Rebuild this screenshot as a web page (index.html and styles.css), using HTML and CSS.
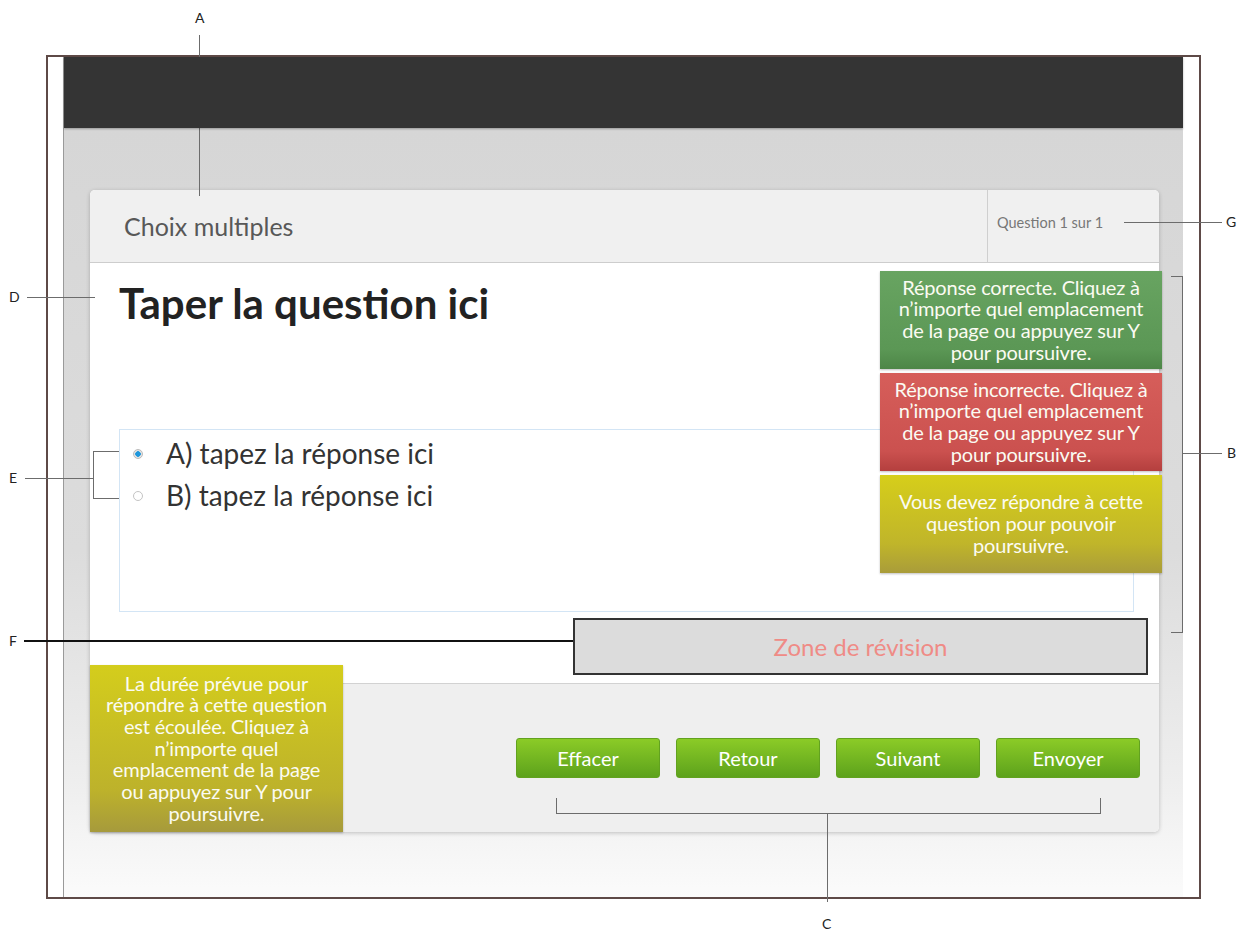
FILE: index.html
```html
<!DOCTYPE html>
<html lang="fr">
<head>
    <meta charset="UTF-8">
    <meta name="viewport" content="width=device-width, initial-scale=1.0">
    <title>Diapositive de question à choix multiples</title>
    <link rel="stylesheet" href="styles.css">
</head>
<body>
    <div class="figure">
        <div class="frame">
            <div class="app">
                <div class="topbar"></div>
                <div class="stage">
                    <div class="quiz-card">
                        <div class="card-head">
                            <div class="slide-type">Choix multiples</div>
                            <div class="progress">Question 1 sur 1</div>
                        </div>

                        <div class="card-body">
                            <h1 class="question">Taper la question ici</h1>
                            <div class="answers">
                                <label class="answer"><span class="radio checked"></span>A) tapez la réponse ici</label>
                                <label class="answer"><span class="radio"></span>B) tapez la réponse ici</label>
                            </div>
                            <div class="review-area">Zone de révision</div>
                        </div>

                        <div class="card-foot">
                            <button class="btn">Effacer</button>
                            <button class="btn">Retour</button>
                            <button class="btn">Suivant</button>
                            <button class="btn">Envoyer</button>
                        </div>

                        <!-- messages de retour -->
                        <div class="feedback">
                            <div class="msg msg-correct">Réponse correcte. Cliquez à<br>n’importe quel emplacement<br>de la page ou appuyez sur Y<br>pour poursuivre.</div>
                            <div class="msg msg-wrong">Réponse incorrecte. Cliquez à<br>n’importe quel emplacement<br>de la page ou appuyez sur Y<br>pour poursuivre.</div>
                            <div class="msg msg-required">Vous devez répondre à cette<br>question pour pouvoir<br>poursuivre.</div>
                        </div>
                        <div class="msg msg-timeout">La durée prévue pour<br>répondre à cette question<br>est écoulée. Cliquez à<br>n’importe quel<br>emplacement de la page<br>ou appuyez sur Y pour<br>poursuivre.</div>
                    </div>
                </div>
            </div>
        </div>

        <!-- légendes -->
        <div class="callouts">
            <span class="tag tag-a">A</span>
            <span class="tag tag-b">B</span>
            <span class="tag tag-c">C</span>
            <span class="tag tag-d">D</span>
            <span class="tag tag-e">E</span>
            <span class="tag tag-f">F</span>
            <span class="tag tag-g">G</span>

            <div class="lead lead-a"></div>
            <div class="lead lead-b"></div>
            <div class="lead lead-c"></div>
            <div class="lead lead-d"></div>
            <div class="lead lead-e"></div>
            <div class="lead lead-f"></div>
            <div class="lead lead-g"></div>

            <div class="bracket bracket-b"></div>
            <div class="bracket bracket-c"></div>
            <div class="bracket bracket-e"></div>
        </div>
    </div>
</body>
</html>
```

FILE: styles.css
```css
body {
    margin: 0;
    background: #fff;
    font-family: Lato, "Open Sans", sans-serif;
}

.figure {
    position: relative;
    width: 1245px;
    height: 934px;
    padding-top: 55px;
    padding-left: 46px;
    box-sizing: border-box;
}

.frame {
    width: 1155px;
    height: 844px;
    border: 2px solid #5e4a47;
    box-sizing: border-box;
    background: #fff;
    padding-left: 15px;
}

.app {
    width: 1120px;
    height: 100%;
    border-left: 1px solid #9a9a9a;
    box-sizing: border-box;
    display: flex;
    flex-direction: column;
}

.topbar {
    height: 71px;
    background: #343434;
    box-shadow: 0 1px 2px rgba(0, 0, 0, 0.3);
    position: relative;
    z-index: 1;
}

.stage {
    flex: 1;
    padding: 62px 0 0 26px;
    background: linear-gradient(#d6d6d6 0%, #dcdcdc 55%, #eeeeee 85%, #fbfbfb 100%);
}

/* carte de la question */
.quiz-card {
    position: relative;
    width: 1069px;
    border-radius: 5px;
    background: #fff;
    box-shadow: 0 1px 4px rgba(0, 0, 0, 0.22);
}

.card-head {
    display: flex;
    height: 72px;
    background: #f0f0f0;
    border-bottom: 1px solid #cdcdcd;
    border-radius: 5px 5px 0 0;
}

.slide-type {
    flex: 1;
    display: flex;
    align-items: center;
    padding-left: 34px;
    font-size: 25px;
    color: #585858;
}

.progress {
    width: 172px;
    border-left: 1px solid #cfcfcf;
    display: flex;
    align-items: center;
    padding: 0 0 8px 9px;
    box-sizing: border-box;
    font-size: 14.5px;
    color: #777;
}

.card-body {
    height: 420px;
    box-sizing: border-box;
    padding: 15px 11px 8px 29px;
    display: flex;
    flex-direction: column;
}

.question {
    margin: 0;
    font-size: 42px;
    line-height: 50px;
    font-weight: 700;
    color: #222;
}

.answers {
    margin-top: 101px;
    width: 1015px;
    height: 183px;
    box-sizing: border-box;
    border: 1px solid #d3e5f5;
    padding: 2px 0 0 13px;
}

.answer {
    display: flex;
    align-items: center;
    height: 42px;
    font-size: 28px;
    color: #333;
}

.radio {
    width: 10px;
    height: 10px;
    border-radius: 50%;
    margin: 2px 23px 0 0;
    box-sizing: border-box;
    border: 1px solid #c4c4c4;
    background: #fff;
}

.radio.checked {
    border-color: #bbb;
    background: radial-gradient(circle, #1e97dc 0 2.5px, #e4e4e4 3px);
}

.review-area {
    align-self: flex-end;
    margin-top: 6px;
    width: 575px;
    height: 57px;
    box-sizing: border-box;
    border: 2px solid #333;
    background: #dcdcdc;
    display: flex;
    align-items: center;
    justify-content: center;
    font-size: 24px;
    color: #ef8b86;
}

.card-foot {
    height: 149px;
    box-sizing: border-box;
    border-top: 1px solid #d2d2d2;
    background: #efefef;
    border-radius: 0 0 5px 5px;
    display: flex;
    justify-content: flex-end;
    align-items: flex-start;
    gap: 16px;
    padding: 54px 19px 0 0;
}

.btn {
    width: 144px;
    height: 40px;
    border: 1px solid #62a21f;
    border-radius: 3px;
    background: linear-gradient(#8bcb27, #5da21c);
    color: #fff;
    font-family: Lato, sans-serif;
    font-size: 20px;
    cursor: pointer;
}

/* messages affichés au-dessus de la carte */
.feedback {
    position: absolute;
    left: 790px;
    top: 81px;
    width: 282px;
    display: flex;
    flex-direction: column;
    gap: 4px;
}

.msg {
    height: 98px;
    display: flex;
    align-items: center;
    justify-content: center;
    text-align: center;
    font-size: 20px;
    line-height: 21.7px;
    letter-spacing: -0.2px;
    color: #fbfbf2;
    box-shadow: 0 1px 2px rgba(0, 0, 0, 0.25);
}

.msg-correct {
    background: linear-gradient(#68a461, #5b9755 80%, #4d8647);
}

.msg-wrong {
    background: linear-gradient(#d65e5a, #cb514f 80%, #b43f3e);
}

.msg-required {
    background: linear-gradient(#d6ce1a, #c0b52a 70%, #a99c3a);
}

.msg-timeout {
    position: absolute;
    left: 0;
    bottom: 0;
    width: 253px;
    height: 167px;
    background: linear-gradient(#d4cd1c, #bdb22b 75%, #a69a3c);
}

/* légendes de la figure */
.tag {
    position: absolute;
    font-size: 14px;
    line-height: 16px;
    color: #222;
}

.tag-a { left: 195px; top: 10px; }
.tag-b { left: 1227px; top: 445px; }
.tag-c { left: 822px; top: 916px; }
.tag-d { left: 9px; top: 289px; }
.tag-e { left: 9px; top: 470px; }
.tag-f { left: 9px; top: 633px; }
.tag-g { left: 1226px; top: 214px; }

.lead {
    position: absolute;
    background: #6c6c6c;
}

.lead-a { left: 199px; top: 35px; width: 1px; height: 161px; }
.lead-b { left: 1182px; top: 453px; width: 40px; height: 1px; }
.lead-c { left: 827px; top: 814px; width: 1px; height: 88px; }
.lead-d { left: 27px; top: 297px; width: 68px; height: 1px; }
.lead-e { left: 25px; top: 478px; width: 68px; height: 1px; }
.lead-f { left: 24px; top: 640px; width: 549px; height: 2px; background: #111; }
.lead-g { left: 1124px; top: 222px; width: 98px; height: 1px; }

.bracket {
    position: absolute;
    border: 1px solid #6c6c6c;
}

.bracket-b { left: 1171px; top: 276px; width: 11px; height: 355px; border-left: none; }
.bracket-c { left: 556px; top: 798px; width: 543px; height: 15px; border-top: none; }
.bracket-e { left: 93px; top: 451px; width: 25px; height: 46px; border-right: none; }
```
